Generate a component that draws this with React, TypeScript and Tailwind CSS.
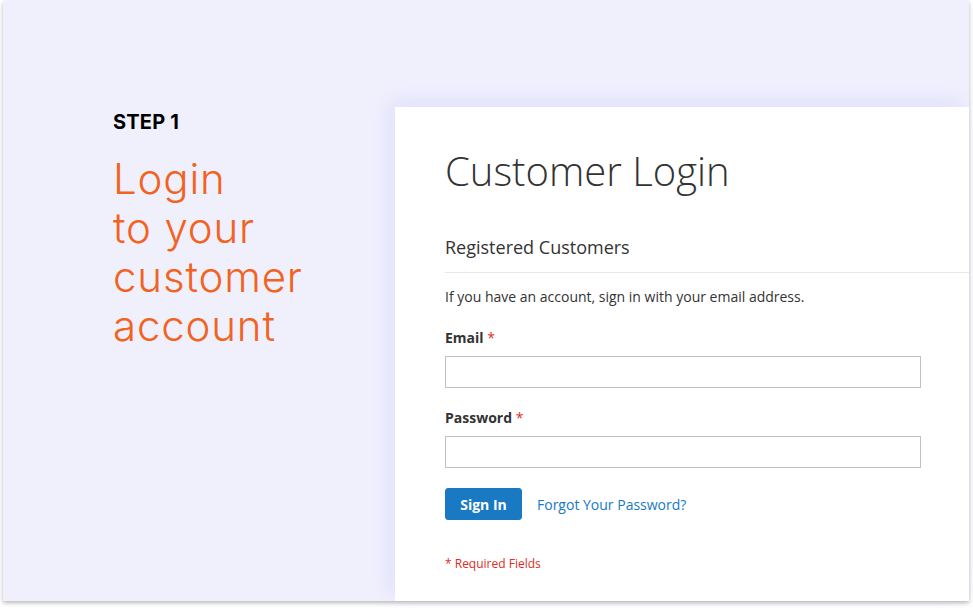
import React, { useState } from "react";

const App = () => {
  const [email, setEmail] = useState("");
  const [password, setPassword] = useState("");

  return (
    <main className="w-[973px] h-[608px] bg-white overflow-hidden">
      {/* Outer frame */}
      <div className="ml-[3px] w-[966px] h-[601px] bg-[#f0f0fd] rounded-tl-[4px] shadow-[0_2px_4px_rgba(0,0,0,0.28)] flex">
        {/* Left intro */}
        <section className="w-[392px] shrink-0 pl-[110px] pt-[108px] font-['Inter',sans-serif]">
          <p className="text-[20px] leading-[28px] font-bold text-black tracking-[0.01em]">STEP 1</p>
          <h1 className="mt-[18px] text-[42px] leading-[49px] font-light tracking-[0.02em] text-[#f26322]">
            Login
            <br />
            to your
            <br />
            customer
            <br />
            account
          </h1>
        </section>

        {/* Login card */}
        <section className="mt-[107px] flex-1 bg-white shadow-[-6px_-6px_22px_rgba(110,110,240,0.12)] pl-[50px] pt-[42px] font-['Open_Sans',sans-serif] text-[#333]">
          <h2 className="text-[40px] leading-[44px] font-light">Customer Login</h2>

          <h3 className="mt-[44px] text-[18px] leading-[20px] font-normal">Registered Customers</h3>
          <div className="mt-[15px] border-b border-[#e8e8e8]" />

          <p className="mt-[14px] text-[14px] leading-[20px]">
            If you have an account, sign in with your email address.
          </p>

          {/* Email */}
          <div className="mt-[21px]">
            <label className="block text-[14px] leading-[20px] font-bold">
              Email <span className="text-[#e02b27] font-normal">*</span>
            </label>
            <input
              type="email"
              value={email}
              onChange={(e) => setEmail(e.target.value)}
              className="mt-[8px] block w-[476px] h-[32px] border border-[#c2c2c2] bg-white px-[9px] text-[14px] outline-none"
            />
          </div>

          {/* Password */}
          <div className="mt-[20px]">
            <label className="block text-[14px] leading-[20px] font-bold">
              Password <span className="text-[#e02b27] font-normal">*</span>
            </label>
            <input
              type="password"
              value={password}
              onChange={(e) => setPassword(e.target.value)}
              className="mt-[8px] block w-[476px] h-[32px] border border-[#c2c2c2] bg-white px-[9px] text-[14px] outline-none"
            />
          </div>

          <div className="mt-[20px] flex items-center gap-[15px]">
            <button
              type="button"
              className="h-[32px] w-[77px] rounded-[3px] bg-[#1979c3] border border-[#1979c3] text-white text-[14px] font-bold"
            >
              Sign In
            </button>
            <a href="#" className="text-[14px] text-[#1979c3]">
              Forgot Your Password?
            </a>
          </div>

          <p className="mt-[36px] text-[12px] leading-[16px] text-[#e02b27]">* Required Fields</p>
        </section>
      </div>
    </main>
  );
};

export default App;
